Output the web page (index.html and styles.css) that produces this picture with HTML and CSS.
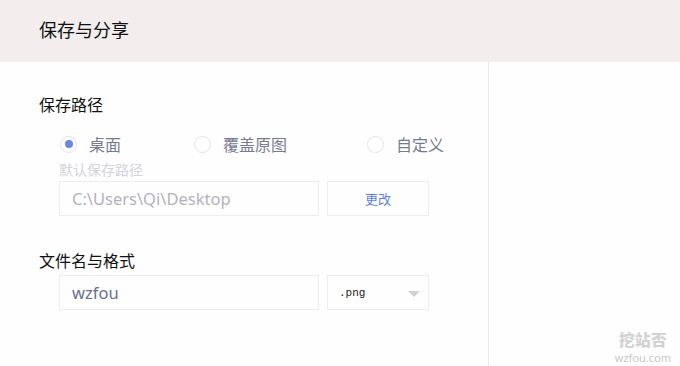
FILE: index.html
```html
<!DOCTYPE html>
<html lang="zh">
<head>
<meta charset="utf-8">
<title>保存与分享</title>
<link rel="stylesheet" href="styles.css">
</head>
<body>
<div class="app">
  <header class="header">保存与分享</header>
  <div class="main">
    <div class="panel">
      <div class="section-title first">保存路径</div>
      <div class="radios">
        <label class="radio checked"><span class="dot"></span><span class="rlabel">桌面</span></label>
        <label class="radio"><span class="dot"></span><span class="rlabel">覆盖原图</span></label>
        <label class="radio"><span class="dot"></span><span class="rlabel">自定义</span></label>
      </div>
      <div class="hint">默认保存路径</div>
      <div class="row">
        <div class="field path">C:\Users\Qi\Desktop</div>
        <div class="field btn">更改</div>
      </div>
      <div class="section-title second">文件名与格式</div>
      <div class="row second-row">
        <div class="field name">wzfou</div>
        <div class="field select"><span class="ext">.png</span><span class="caret"></span></div>
      </div>
    </div>
    <div class="side"></div>
  </div>
  <div class="watermark">
    <div class="wm-cn">挖站否</div>
    <div class="wm-en">wzfou.com</div>
  </div>
</div>
</body>
</html>
```
FILE: styles.css
```css
* { box-sizing: border-box; }
html, body { margin: 0; padding: 0; }
body {
  width: 680px;
  height: 366px;
  overflow: hidden;
  background: #fdfefd;
  font-family: "Noto Sans", "Noto Sans CJK SC", sans-serif;
}
.app {
  position: relative;
  width: 680px;
  height: 366px;
  display: flex;
  flex-direction: column;
}
.header {
  height: 62px;
  flex: none;
  background: #f3eeed;
  padding-left: 39px;
  font-family: "Noto Sans CJK SC", sans-serif;
  font-size: 18px;
  line-height: 58px;
  color: #111;
}
.main {
  flex: 1;
  display: flex;
}
.panel {
  width: 489px;
  border-right: 1px solid #ece8f0;
  padding-left: 39px;
}
.side { flex: 1; }
.section-title {
  font-family: "Noto Sans CJK SC", sans-serif;
  font-size: 16px;
  line-height: 22px;
  color: #111;
}
.section-title.first { margin-top: 31px; }
.section-title.second { margin-top: 33px; }
.radios {
  display: grid;
  grid-template-columns: 134px 173px auto;
  margin-top: 17px;
  padding-left: 21px;
  height: 22px;
}
.radio {
  display: flex;
  align-items: center;
}
.dot {
  width: 17px;
  height: 17px;
  border-radius: 50%;
  border: 1px solid #e2e2ea;
  background: #fff;
  display: flex;
  align-items: center;
  justify-content: center;
  margin-right: 12px;
}
.radio.checked .dot::after {
  content: "";
  width: 8px;
  height: 8px;
  border-radius: 50%;
  background: #6c84e2;
}
.rlabel {
  font-family: "Noto Sans CJK SC", sans-serif;
  font-size: 16px;
  color: #777b92;
}
.hint {
  margin-top: 6px;
  padding-left: 20px;
  font-family: "Noto Sans CJK SC", sans-serif;
  font-size: 14px;
  line-height: 18px;
  color: #d4d2da;
}
.row {
  display: flex;
  gap: 8px;
  padding-left: 20px;
  margin-top: 3px;
}
.row.second-row { margin-top: 4px; }
.field {
  height: 35px;
  border: 1px solid #ececf2;
  background: #fefefe;
  display: flex;
  align-items: center;
}
.path, .name {
  width: 260px;
  padding-left: 12px;
  font-size: 16.5px;
}
.path { color: #b3b2bc; }
.name { color: #67708e; }
.btn {
  width: 102px;
  justify-content: center;
  font-family: "Noto Sans CJK SC", sans-serif;
  font-size: 13px;
  color: #5f7de0;
}
.select {
  width: 102px;
  padding-left: 11px;
  position: relative;
}
.ext {
  font-family: "Liberation Mono", monospace;
  font-size: 11px;
  color: #222;
}
.caret {
  position: absolute;
  right: 8px;
  top: 15px;
  width: 0;
  height: 0;
  border-left: 6px solid transparent;
  border-right: 6px solid transparent;
  border-top: 6px solid #cfcfd8;
}
.watermark {
  position: absolute;
  right: 9px;
  bottom: 1px;
  text-align: center;
  display: flex;
  flex-direction: column;
}
.wm-cn {
  font-family: "Noto Sans CJK SC", sans-serif;
  font-weight: 900;
  font-size: 15.5px;
  line-height: 22px;
  letter-spacing: 0.5px;
  color: #d2d2d2;
}
.wm-en {
  font-family: "Noto Sans", sans-serif;
  font-size: 11px;
  line-height: 15px;
  color: #c9c9c9;
}
```
